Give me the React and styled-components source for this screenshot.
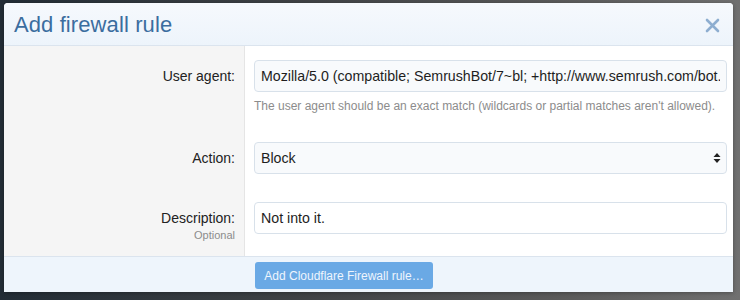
import React from 'react'
import styled, { createGlobalStyle } from 'styled-components'

const GlobalStyle = createGlobalStyle`
  html, body {
    margin: 0;
    height: 300px;
    overflow: hidden;
  }
  body {
    background: linear-gradient(to right, #232d36 0%, #3f4245 40%, #5a5a5a 75%, #707070 100%);
    font-family: "Liberation Sans", Arial, Helvetica, sans-serif;
  }
`

const App = () => {
  return (
    <>
      <GlobalStyle />
      <Modal>
        {/* header */}
        <ModalHeader>
          <ModalTitle>Add firewall rule</ModalTitle>
          <CloseButton aria-label="Close">
            <svg width="15" height="15" viewBox="0 0 15 15">
              <path d="M2 2 L13 13 M13 2 L2 13" stroke="#8eaed0" strokeWidth="2.6" strokeLinecap="round" />
            </svg>
          </CloseButton>
        </ModalHeader>

        {/* rows */}
        <FormRow>
          <LabelCell>
            <RowLabel>User agent:</RowLabel>
          </LabelCell>
          <InputCell>
            <TextBox readOnly muted defaultValue="Mozilla/5.0 (compatible; SemrushBot/7~bl; +http://www.semrush.com/bot.html)" />
            <Explain>The user agent should be an exact match (wildcards or partial matches aren't allowed).</Explain>
          </InputCell>
        </FormRow>

        <FormRow>
          <LabelCell>
            <RowLabel>Action:</RowLabel>
          </LabelCell>
          <InputCell>
            <SelectWrap>
              <SelectBox defaultValue="block">
                <option value="block">Block</option>
                <option value="challenge">Challenge</option>
                <option value="js_challenge">JS Challenge</option>
                <option value="whitelist">Whitelist</option>
              </SelectBox>
              <SelectArrows width="8" height="12" viewBox="0 0 8 12">
                <path d="M4 1 L7.5 5 L0.5 5 Z M4 11 L7.5 7 L0.5 7 Z" fill="#222" />
              </SelectArrows>
            </SelectWrap>
          </InputCell>
        </FormRow>

        <FormRow last>
          <LabelCell>
            <RowLabel>Description:</RowLabel>
            <LabelHint>Optional</LabelHint>
          </LabelCell>
          <InputCell>
            <TextBox defaultValue="Not into it." />
          </InputCell>
        </FormRow>

        {/* footer */}
        <ModalFooter>
          <FooterSpacer />
          <FooterActions>
            <PrimaryButton>Add Cloudflare Firewall rule…</PrimaryButton>
          </FooterActions>
        </ModalFooter>
      </Modal>
    </>
  )
}

export default App

const Modal = styled.div`
  margin: 3px 0 0 4px;
  width: 729px;
  height: 289px;
  background: #fff;
  border-radius: 4px 4px 0 0;
  overflow: hidden;
  display: flex;
  flex-direction: column;
  box-shadow: 0 1px 4px rgba(0, 0, 0, 0.3);
`

const ModalHeader = styled.div`
  flex: none;
  display: flex;
  align-items: center;
  justify-content: space-between;
  padding: 2px 13px 0 10px;
  box-sizing: border-box;
  height: 43px;
  background: linear-gradient(to bottom, #f6f9fd, #edf4fb);
  border-bottom: 1px solid #dbe4ee;
`

const ModalTitle = styled.h2`
  margin: 0;
  font-size: 22px;
  font-weight: normal;
  color: #3b6d9f;
  letter-spacing: 0.1px;
`

const CloseButton = styled.button`
  border: 0;
  background: none;
  padding: 0;
  width: 15px;
  height: 15px;
  display: flex;
  margin-top: 1px;
  cursor: pointer;
`

const FormRow = styled.div`
  display: grid;
  grid-template-columns: 241px 1fr;
  flex: ${p => (p.last ? '1' : 'none')};
`

const LabelCell = styled.div`
  background: #f5f5f5;
  border-right: 1px solid #e5e5e5;
  padding: 20px 9px 0 0;
  text-align: right;
`

const RowLabel = styled.div`
  font-size: 14px;
  line-height: 20px;
  color: #222;
`

const LabelHint = styled.div`
  font-size: 11px;
  line-height: 14px;
  color: #8c8c8c;
`

const InputCell = styled.div`
  padding: 14px 6px 14px 9px;
`

const TextBox = styled.input`
  box-sizing: border-box;
  display: block;
  width: 100%;
  height: 32px;
  padding: 0 6px;
  border: 1px solid #d8e1ea;
  border-radius: 4px;
  background: ${p => (p.muted ? '#f8fafc' : '#fff')};
  font-family: "Liberation Sans", Arial, Helvetica, sans-serif;
  font-size: 14.2px;
  color: #1e1e1e;
  outline: none;
`

const Explain = styled.div`
  margin-top: 6px;
  font-size: 12px;
  line-height: 16px;
  color: #8c8c8c;
`

const SelectWrap = styled.div`
  position: relative;
  height: 32px;
`

const SelectBox = styled.select`
  box-sizing: border-box;
  display: block;
  width: 100%;
  height: 32px;
  padding: 0 6px;
  border: 1px solid #d8e1ea;
  border-radius: 4px;
  background: #f8fafc;
  font-family: "Liberation Sans", Arial, Helvetica, sans-serif;
  font-size: 14.2px;
  color: #1e1e1e;
  appearance: none;
  -webkit-appearance: none;
  outline: none;
`

const SelectArrows = styled.svg`
  position: absolute;
  right: 6px;
  top: 10px;
  pointer-events: none;
`

const ModalFooter = styled.div`
  display: grid;
  flex: none;
  grid-template-columns: 241px 1fr;
  height: 36px;
  box-sizing: border-box;
  background: #eef5fc;
  border-top: 1px solid #dbe4ee;
`

const FooterSpacer = styled.div``

const FooterActions = styled.div`
  padding: 5px 0 0 10px;
`

const PrimaryButton = styled.button`
  height: 27px;
  width: 178px;
  border: 0;
  border-radius: 3px;
  background: #6aa9e5;
  color: #eef5fd;
  font-family: "Liberation Sans", Arial, Helvetica, sans-serif;
  font-size: 12px;
  padding: 0;
  white-space: nowrap;
  text-align: center;
  cursor: pointer;
`
